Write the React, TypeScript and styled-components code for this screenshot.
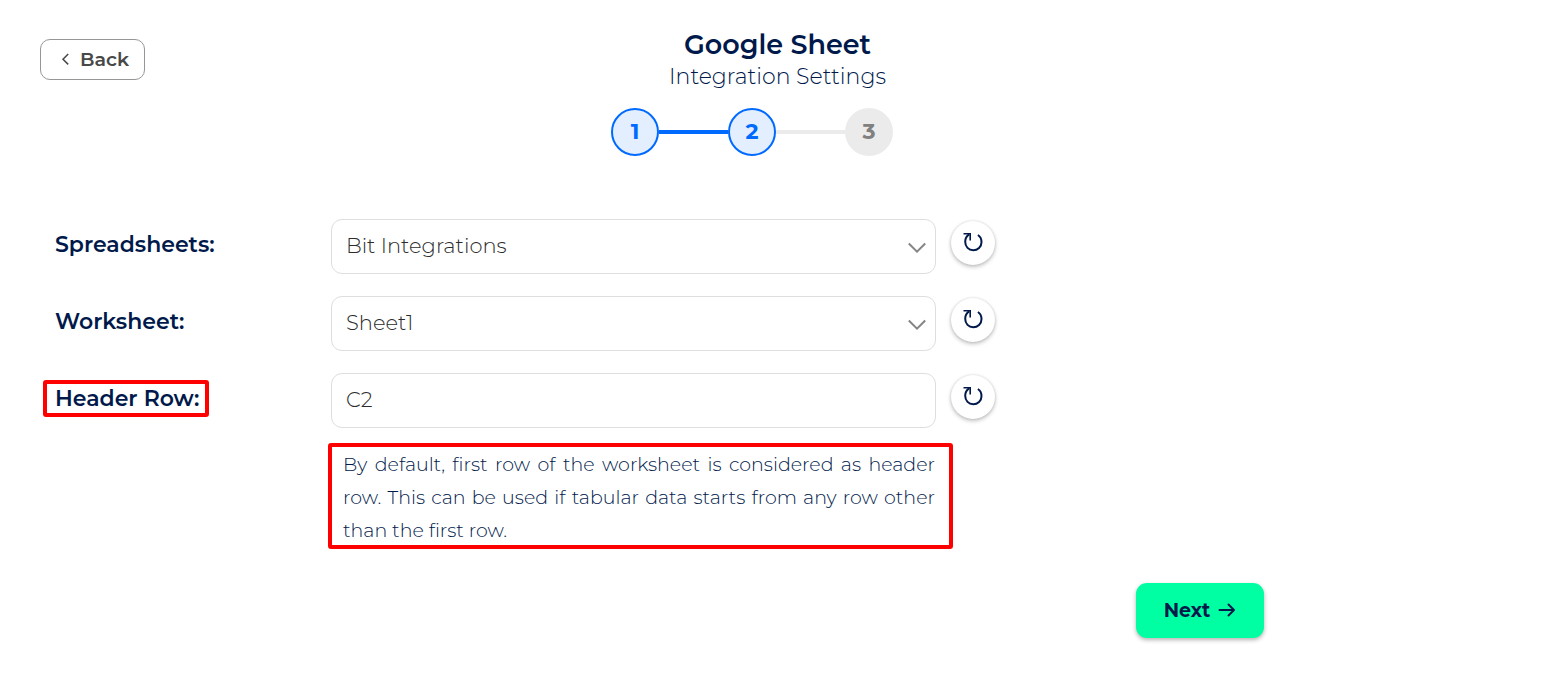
import React from "react";
import styled, { createGlobalStyle } from "styled-components";

const navy = "#00194b";
const blue = "#006aff";

const GlobalStyle = createGlobalStyle`
  *, *::before, *::after { box-sizing: border-box; }
  body { margin: 0; background: #fff; }
  body, button, input, select {
    font-family: Montserrat, Inter, "Liberation Sans", sans-serif;
    color: ${navy};
  }
`;

const Page = styled.div`
  padding: 28px 37px 38px 40px;
`;

const Header = styled.header`
  display: grid;
  grid-template-columns: 1fr auto 1fr;
  align-items: start;
`;

const BackButton = styled.button`
  display: flex;
  align-items: center;
  justify-self: start;
  gap: 10px;
  height: 41px;
  margin-top: 11px;
  padding: 0 15px 1px 20px;
  border: 1px solid #969696;
  border-radius: 10px;
  background: #fff;
  color: #484848;
  font-size: 19px;
  font-weight: 600;
`;

const Heading = styled.div`
  text-align: center;
`;

const Title = styled.h1`
  margin: 0;
  font-size: 27px;
  line-height: 33px;
  font-weight: 600;
`;

const Subtitle = styled.p`
  margin: 0;
  font-size: 22px;
  line-height: 31px;
  font-weight: 300;
`;

const Steps = styled.ol`
  display: flex;
  align-items: center;
  justify-content: center;
  margin: 16px 51px 0 0;
  padding: 0;
  list-style: none;
`;

const Step = styled.li<{ $active?: boolean }>`
  display: flex;
  align-items: center;

  &:not(:first-child)::before {
    content: "";
    width: 69px;
    height: 4px;
    background: ${(p) => (p.$active ? blue : "#ebebeb")};
  }
`;

const StepCircle = styled.span<{ $active?: boolean }>`
  display: grid;
  place-items: center;
  width: 48px;
  height: 48px;
  padding-bottom: 2px;
  border: 2px solid ${(p) => (p.$active ? blue : "#ebebeb")};
  border-radius: 50%;
  background: ${(p) => (p.$active ? "#e3efff" : "#ebebeb")};
  color: ${(p) => (p.$active ? blue : "#808080")};
  font-size: 22px;
  font-weight: 700;
`;

const Form = styled.form`
  max-width: 1221px;
  margin: 63px 0 0 3px;
`;

const Row = styled.div`
  display: grid;
  grid-template-columns: 273px minmax(0, 605px) 44px;
  column-gap: 15px;
  align-items: center;
  margin-bottom: 22px;
`;

const LabelCell = styled.div`
  display: flex;
  margin-bottom: 4px;
`;

const Label = styled.label<{ $marked?: boolean }>`
  padding: 0 6px 0 8px;
  border: 4px solid ${(p) => (p.$marked ? "#ff0000" : "transparent")};
  border-radius: 3px;
  font-size: 22px;
  line-height: 29px;
  font-weight: 600;
`;

const SelectWrap = styled.div`
  position: relative;
`;

const Chevron = styled.svg`
  position: absolute;
  top: 22px;
  right: 9px;
  pointer-events: none;
`;

const controlStyle = `
  display: block;
  width: 100%;
  height: 55px;
  margin: 0;
  padding: 0 14px 2px;
  border: 1px solid #dedede;
  border-radius: 11px;
  background: #fff;
  color: #2c2c2c;
  font-size: 21px;
  font-weight: 300;
`;

const Select = styled.select`
  ${controlStyle}
  appearance: none;
`;

const TextInput = styled.input`
  ${controlStyle}
`;

const RefreshButton = styled.button`
  display: grid;
  place-items: center;
  width: 44px;
  height: 44px;
  margin-bottom: 7px;
  padding: 0;
  border: 0;
  border-radius: 50%;
  background: #fff;
  box-shadow: 0 2px 4px rgba(0, 0, 0, 0.24), 0 0 3px rgba(0, 0, 0, 0.12);
`;

const HintRow = styled(Row)`
  margin: -7px 0 34px;
`;

const HintBox = styled.div`
  grid-column: 2;
  display: flex;
  margin: 0 -17px 0 -3px;
  padding: 0 14px 0 11px;
  border: 4px solid #ff0000;
  border-radius: 3px;
`;

const Hint = styled.p`
  margin: 1px 0 -2px;
  font-size: 19px;
  line-height: 33px;
  font-weight: 300;
  text-align: justify;
`;

const Actions = styled.div`
  display: flex;
  justify-content: flex-end;
`;

const NextButton = styled.button`
  display: flex;
  align-items: center;
  justify-content: center;
  gap: 8px;
  width: 128px;
  height: 55px;
  padding: 0 0 1px;
  border: 0;
  border-radius: 11px;
  background: #00ffa3;
  box-shadow: 0 2px 4px rgba(0, 0, 0, 0.3);
  font-size: 19px;
  font-weight: 700;
`;

const DownIcon = () => (
  <Chevron width="20" height="14" viewBox="0 0 20 14" fill="none" stroke="#858585" strokeWidth="2" aria-hidden="true">
    <path d="M1.8 2.5 10 10.7 18.2 2.5" />
  </Chevron>
);

const Refresh = ({ name }: { name: string }) => (
  <RefreshButton type="button" aria-label={`Refresh ${name}`}>
    <svg width="24" height="24" viewBox="0 0 24 24" fill="none" stroke={navy} strokeWidth="2" aria-hidden="true">
      <path d="M8.2 3.4C5.2 5.2 4.2 7.7 4.2 10.8c0 5 3.5 8.4 8 8.4s8.3-3.4 8.3-8c0-3.1-1.3-5.7-3.6-7.2" />
      <path d="M2.5 2.7h6.7v6.8" strokeWidth="1.6" />
    </svg>
  </RefreshButton>
);

const selects = [
  { id: "spreadsheets", label: "Spreadsheets:", value: "Bit Integrations" },
  { id: "worksheet", label: "Worksheet:", value: "Sheet1" },
];

export default function App() {
  return (
    <>
      <GlobalStyle />
      <Page>
        <Header>
          <BackButton type="button">
            <svg width="9" height="12" viewBox="0 0 9 12" fill="none" stroke="currentColor" strokeWidth="1.5" aria-hidden="true">
              <path d="M7.2 1 2 6.2l5.2 5.2" />
            </svg>
            Back
          </BackButton>
          <Heading>
            <Title>Google Sheet</Title>
            <Subtitle>Integration Settings</Subtitle>
          </Heading>
        </Header>

        <Steps>
          <Step $active><StepCircle $active>1</StepCircle></Step>
          <Step $active><StepCircle $active>2</StepCircle></Step>
          <Step><StepCircle>3</StepCircle></Step>
        </Steps>

        <Form onSubmit={(e) => e.preventDefault()}>
          {selects.map(({ id, label, value }) => (
            <Row key={id}>
              <LabelCell><Label htmlFor={id}>{label}</Label></LabelCell>
              <SelectWrap>
                <Select id={id} defaultValue={value}>
                  <option>{value}</option>
                </Select>
                <DownIcon />
              </SelectWrap>
              <Refresh name={id} />
            </Row>
          ))}
          <Row>
            <LabelCell><Label htmlFor="header-row" $marked>Header Row:</Label></LabelCell>
            <TextInput id="header-row" type="text" defaultValue="C2" aria-describedby="header-hint" />
            <Refresh name="header row" />
          </Row>
          <HintRow>
            <HintBox>
              <Hint id="header-hint">
                By default, first row of the worksheet is considered as header row. This can be used if tabular data
                starts from any row other than the first row.
              </Hint>
            </HintBox>
          </HintRow>
          <Actions>
            <NextButton type="submit">
              Next
              <svg width="18" height="16" viewBox="0 0 18 16" fill="none" stroke="currentColor" strokeWidth="2" strokeLinecap="round" strokeLinejoin="round" aria-hidden="true">
                <path d="M1.5 8h14.5M10.5 2.5 16 8l-5.5 5.5" />
              </svg>
            </NextButton>
          </Actions>
        </Form>
      </Page>
    </>
  );
}
